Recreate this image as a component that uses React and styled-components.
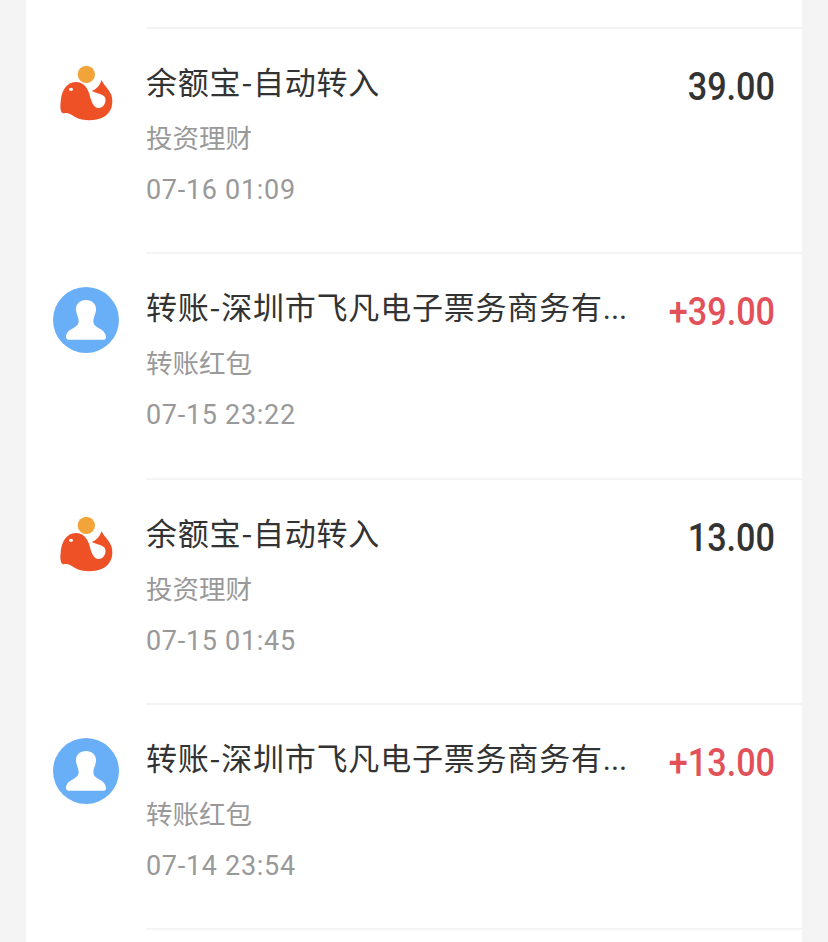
import styled, { createGlobalStyle } from "styled-components";

const records = [
    { type: "fund", title: "余额宝-自动转入", category: "投资理财", time: "07-16 01:09", amount: "39.00" },
    { type: "user", title: "转账-深圳市飞凡电子票务商务有", cut: true, category: "转账红包", time: "07-15 23:22", amount: "+39.00", income: true },
    { type: "fund", title: "余额宝-自动转入", category: "投资理财", time: "07-15 01:45", amount: "13.00" },
    { type: "user", title: "转账-深圳市飞凡电子票务商务有", cut: true, category: "转账红包", time: "07-14 23:54", amount: "+13.00", income: true },
];

const FundIcon = () => (
    <svg width="64" height="66" viewBox="-3 6 192 198">
        <circle cx="94" cy="43" r="26" fill="#f2a33a" />
        <path
            d="M17 125 C19 93 35 66 62 66 C86 66 99 85 104 105 C109 127 117 144 130 144 C147 144 155 126 150 112 C144 102 125 100 110 93 C125 88 135 75 140 60 C145 75 161 85 169 105 C177 132 169 158 146 171 C120 184 85 184 60 171 C50 165 38 157 27 160 C19 160 14 150 17 125 Z"
            fill="#ee5125"
        />
        <ellipse cx="48" cy="88" rx="6" ry="5" fill="#fff" />
    </svg>
);

const UserIcon = () => (
    <svg width="66" height="66" viewBox="39 36 198 198">
        <circle cx="138" cy="135" r="99" fill="#69aff8" />
        <path
            d="M138 75 C119 75 106 88 108 106 C110 120 116 128 116 138 C116 150 108 155 95 162 C82 169 78 178 78 187 C78 192 82 194 86 194 H190 C196 194 198 191 198 187 C198 178 193 169 181 162 C168 155 160 150 160 138 C160 128 166 120 168 106 C170 88 157 75 138 75 Z"
            fill="#fff"
        />
    </svg>
);

const App = () => {
    return (
        <>
            <GlobalStyle />
            <Card>
                <TopRule />
                {records.map((item) => (
                    <Row key={item.time}>
                        <IconCol>{item.type === "fund" ? <FundIcon /> : <UserIcon />}</IconCol>
                        <Content>
                            <TitleLine>
                                <Title>
                                    {item.title}
                                    {item.cut && <Dots>...</Dots>}
                                </Title>
                                <Amount $income={item.income}>{item.amount}</Amount>
                            </TitleLine>
                            <Category>{item.category}</Category>
                            <Time>{item.time}</Time>
                        </Content>
                    </Row>
                ))}
            </Card>
        </>
    );
};

export default App;

const GlobalStyle = createGlobalStyle`
    html, body {
        margin: 0;
        height: 942px;
        overflow: hidden;
        background: #f4f4f4;
    }
`;

const Card = styled.div`
    margin: 0 26px;
    height: 942px;
    background: #fff;
    font-family: Roboto, "Noto Sans CJK SC", sans-serif;
`;

const TopRule = styled.div`
    height: 27px;
    margin-left: 120px;
    border-bottom: 2px solid #f4f4f4;
`;

const Row = styled.div`
    display: flex;
    height: 225.3px;
    box-sizing: border-box;
`;

const IconCol = styled.div`
    width: 120px;
    flex-shrink: 0;
    display: flex;
    justify-content: center;
    align-items: flex-start;
    padding-top: 33px;
    box-sizing: border-box;
`;

const Content = styled.div`
    flex: 1;
    min-width: 0;
    box-sizing: border-box;
    padding: 32px 27px 0 0;
    border-bottom: 2px solid #f4f4f4;
`;

const TitleLine = styled.div`
    display: flex;
    justify-content: space-between;
    align-items: center;
    height: 46px;
`;

const Title = styled.div`
    padding-bottom: 6px;
    font-family: "Noto Sans CJK SC", Roboto, sans-serif;
    font-size: 31px;
    letter-spacing: 0.8px;
    line-height: 40px;
    color: #333;
    white-space: nowrap;
`;

const Dots = styled.span`
    font-family: Roboto, sans-serif;
    letter-spacing: 0;
    line-height: 0;
`;

const Amount = styled.div`
    padding-top: 6px;
    font-size: 38px;
    font-weight: 500;
    color: ${(props) => (props.$income ? "#e2505a" : "#333")};
    transform: scaleX(0.9);
    transform-origin: right center;
`;

const Category = styled.div`
    margin-top: 12px;
    font-size: 26.5px;
    line-height: 40px;
    color: #999;
`;

const Time = styled.div`
    margin-top: 11px;
    font-size: 27px;
    letter-spacing: 0.7px;
    line-height: 40px;
    color: #999;
`;
